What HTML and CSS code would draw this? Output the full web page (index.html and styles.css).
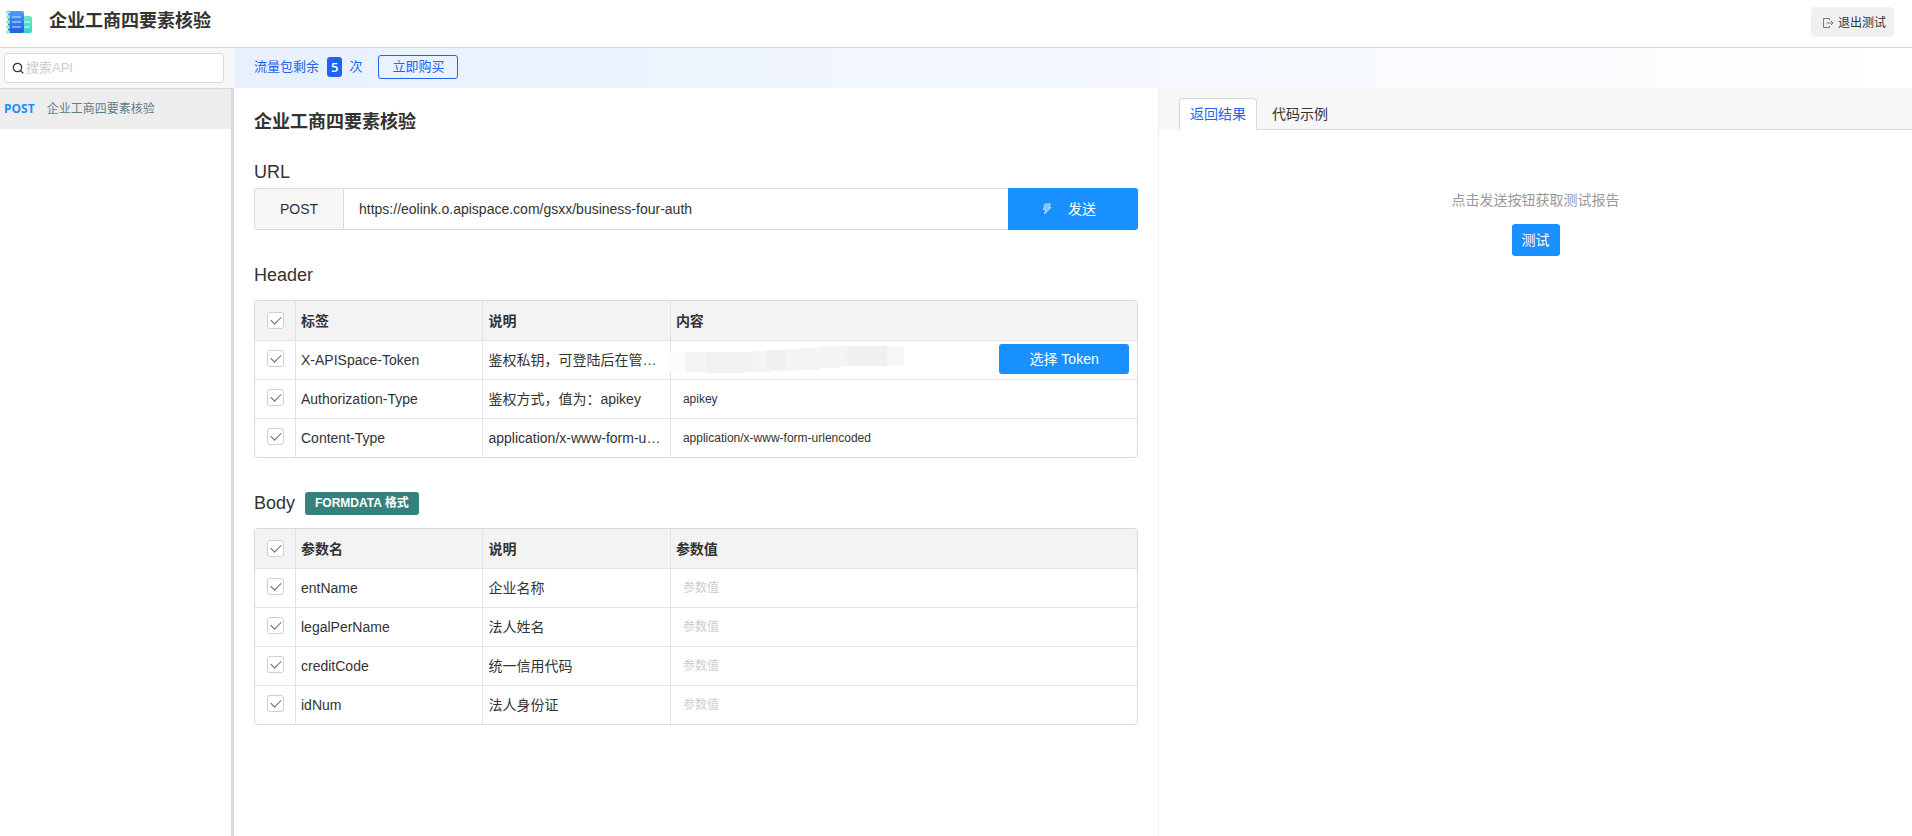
FILE: index.html
```html
<!DOCTYPE html>
<html lang="zh-CN">
<head>
<meta charset="utf-8">
<title>企业工商四要素核验</title>
<link rel="stylesheet" href="styles.css">
</head>
<body>
<header class="topbar">
  <svg class="logo" viewBox="0 0 28 24" aria-hidden="true">
    <defs>
      <linearGradient id="book" x1="0" y1="0" x2="0" y2="1"><stop offset="0" stop-color="#4f9bff"/><stop offset="1" stop-color="#1c5fe8"/></linearGradient>
      <linearGradient id="page" x1="0" y1="0" x2="0" y2="1"><stop offset="0" stop-color="#6fe9c4"/><stop offset="1" stop-color="#2fd6d0"/></linearGradient>
    </defs>
    <rect x="15" y="6" width="12" height="17" rx="2" fill="url(#page)"/>
    <path d="M19 12h6M19 17h6" stroke="#d3faf0" stroke-width="1"/>
    <rect x="3" y="1" width="16" height="22" rx="2" fill="url(#book)"/>
    <path d="M7 7h9M7 12h9M7 17h9" stroke="#d6e7ff" stroke-width="1"/>
    <g fill="#8ff0c8"><circle cx="3" cy="2" r="2"/><circle cx="3" cy="7" r="2"/><circle cx="3" cy="12" r="2"/><circle cx="3" cy="17" r="2"/><circle cx="3" cy="22" r="2"/></g>
  </svg>
  <h1 class="topbar-title">企业工商四要素核验</h1>
  <button class="exit" type="button">
    <svg class="exit-icon" viewBox="0 0 12 12" aria-hidden="true"><path d="M7.500 3V1.500H1.500V10.500H7.500V9M4.500 6H11M9 4l2 2-2 2" fill="none" stroke="#777" stroke-width="1"/></svg>
    退出测试
  </button>
</header>
<div class="layout">
  <aside class="sidebar">
    <div class="search">
      <label class="search-box">
        <svg class="search-icon" viewBox="0 0 12 12" aria-hidden="true"><circle cx="5.500" cy="5.500" r="4.200" fill="none" stroke="#333" stroke-width="1.200"/><path d="M8.500 8.500L11.300 11.300" stroke="#333" stroke-width="1.200"/></svg>
        <input class="search-input" type="text" placeholder="搜索API" aria-label="搜索API">
      </label>
    </div>
    <nav class="api-list">
      <a class="api-item" href="#"><span class="api-method">POST</span><span class="api-name">企业工商四要素核验</span></a>
    </nav>
  </aside>
  <div class="content">
    <div class="notice">
      <span>流量包剩余</span><span class="count">5</span><span>次</span>
      <button class="buy" type="button">立即购买</button>
    </div>
    <div class="panels">
      <main class="request">
        <h2 class="request-title">企业工商四要素核验</h2>
        <label class="section-title" for="url">URL</label>
        <div class="url-bar">
          <span class="url-method">POST</span>
          <input class="url-input" id="url" type="text" value="https://eolink.o.apispace.com/gsxx/business-four-auth">
          <button class="send" type="button">
            <svg class="send-icon" viewBox="0 0 10 12" aria-hidden="true"><path d="M3 1H8.500L7 4.500H9L2.500 11L4 6.500H1.500Z" fill="#7fc0ff" stroke="#b8dcff" stroke-width="1"/></svg>
            发送
          </button>
        </div>
        <h3 class="section-title section-gap">Header</h3>
        <div class="table-box">
          <table class="params">
            <colgroup><col class="col-check"><col class="col-name"><col class="col-desc"><col></colgroup>
            <thead><tr><th class="check-cell"><input class="check" type="checkbox" checked aria-label="全选"></th><th>标签</th><th>说明</th><th>内容</th></tr></thead>
            <tbody>
              <tr><td class="check-cell"><input class="check" type="checkbox" checked aria-label="X-APISpace-Token"></td><td>X-APISpace-Token</td><td>鉴权私钥，可登陆后在管理后台查看</td>
                <td class="token-cell"><div class="token-row"><input class="value" type="text" aria-label="X-APISpace-Token 内容"><button class="token" type="button">选择 Token</button></div>
                  <svg class="smear" viewBox="0 0 237 28" aria-hidden="true">
                    <path d="M0 6H86V5H99V4H119V3H131V2H152V0H237V20H172V22H153V24H126V25H106V26H77V27H40V26H0Z" fill="#f4f4f4"/>
                    <path d="M0 6H19V26H0Z" fill="#fcfcfc"/><path d="M39 6H86V26H77V27H40Z" fill="#f1f1f1"/><path d="M99 4H119V24H99ZM180 0H220V20H180Z" fill="#f0f0f0"/><path d="M220 0H237V20H220Z" fill="#f6f6f6"/>
                  </svg></td></tr>
              <tr><td class="check-cell"><input class="check" type="checkbox" checked aria-label="Authorization-Type"></td><td>Authorization-Type</td><td>鉴权方式，值为：apikey</td><td><input class="value" type="text" value="apikey" aria-label="Authorization-Type 内容"></td></tr>
              <tr><td class="check-cell"><input class="check" type="checkbox" checked aria-label="Content-Type"></td><td>Content-Type</td><td>application/x-www-form-urlencoded</td><td><input class="value" type="text" value="application/x-www-form-urlencoded" aria-label="Content-Type 内容"></td></tr>
            </tbody>
          </table>
        </div>
        <h3 class="section-title section-gap">Body <span class="format">FORMDATA 格式</span></h3>
        <div class="table-box">
          <table class="params">
            <colgroup><col class="col-check"><col class="col-name"><col class="col-desc"><col></colgroup>
            <thead><tr><th class="check-cell"><input class="check" type="checkbox" checked aria-label="全选"></th><th>参数名</th><th>说明</th><th>参数值</th></tr></thead>
            <tbody>
              <tr><td class="check-cell"><input class="check" type="checkbox" checked aria-label="entName"></td><td>entName</td><td>企业名称</td><td><input class="value" type="text" placeholder="参数值" aria-label="entName 参数值"></td></tr>
              <tr><td class="check-cell"><input class="check" type="checkbox" checked aria-label="legalPerName"></td><td>legalPerName</td><td>法人姓名</td><td><input class="value" type="text" placeholder="参数值" aria-label="legalPerName 参数值"></td></tr>
              <tr><td class="check-cell"><input class="check" type="checkbox" checked aria-label="creditCode"></td><td>creditCode</td><td>统一信用代码</td><td><input class="value" type="text" placeholder="参数值" aria-label="creditCode 参数值"></td></tr>
              <tr><td class="check-cell"><input class="check" type="checkbox" checked aria-label="idNum"></td><td>idNum</td><td>法人身份证</td><td><input class="value" type="text" placeholder="参数值" aria-label="idNum 参数值"></td></tr>
            </tbody>
          </table>
        </div>
      </main>
      <section class="result">
        <div class="tabs" role="tablist">
          <button class="tab tab-active" type="button" role="tab" aria-selected="true">返回结果</button>
          <div class="tabs-rest"><button class="tab" type="button" role="tab" aria-selected="false">代码示例</button></div>
        </div>
        <div class="empty">
          <p class="empty-text">点击发送按钮获取测试报告</p>
          <button class="test" type="button">测试</button>
        </div>
      </section>
    </div>
  </div>
</div>
</body>
</html>
```
FILE: styles.css
```css
* { box-sizing: border-box; }
body {
  margin: 0;
  min-height: 100vh;
  display: flex;
  flex-direction: column;
  font: 14px/20px "Liberation Sans", "Noto Sans CJK SC", sans-serif;
  color: #333;
  background: #fff;
}
button, input { font: inherit; color: inherit; margin: 0; }
button { border: 0; cursor: pointer; }
h1, h2, h3, p { margin: 0; }

.topbar {
  display: flex;
  align-items: flex-start;
  height: 48px;
  padding: 7px 18px 0 5px;
  border-bottom: 1px solid #d9d9d9;
}
.logo { width: 28px; height: 24px; margin-top: 3px; }
.topbar-title { margin-left: 16px; font-size: 18px; line-height: 28px; font-weight: 700; }
.exit {
  display: flex;
  align-items: center;
  gap: 4px;
  height: 30px;
  margin-left: auto;
  padding: 1px 8px 0 11px;
  border-radius: 4px;
  background: #f0f0f0;
  font-size: 12px;
}
.exit-icon { width: 12px; height: 12px; }

.layout { flex: 1; display: flex; }
.sidebar { width: 234px; flex: none; display: flex; flex-direction: column; }
.search { padding: 5px 10px 5px 4px; background: #f7f7f7; border-bottom: 1px solid #d9d9d9; }
.search-box {
  display: flex;
  align-items: center;
  gap: 2px;
  height: 30px;
  padding: 0 7px;
  border: 1px solid #d9d9d9;
  border-radius: 3px;
  background: #fff;
}
.search-icon { width: 12px; height: 12px; flex: none; }
.search-input { flex: 1; min-width: 0; padding: 0; border: 0; outline: 0; background: none; font-size: 13px; }
::placeholder { color: #ccc; opacity: 1; }
.api-list { flex: 1; border-right: 3px solid #d9d9d9; }
.api-item {
  display: flex;
  align-items: center;
  gap: 12px;
  height: 40px;
  padding: 0 4px;
  background: #ededed;
  font-size: 12px;
  text-decoration: none;
}
.api-method { color: #1890ff; font-family: "Open Sans", sans-serif; font-weight: 700; }
.api-name { color: #607d8b; }

.content { flex: 1; min-width: 0; display: flex; flex-direction: column; }
.notice {
  display: flex;
  align-items: center;
  height: 40px;
  padding: 0 20px 2px;
  background: linear-gradient(90deg, #e8f0fe, #fff);
  color: #1f63f0;
  font-size: 13px;
}
.count {
  margin: 0 7px 0 8px;
  padding: 0 4px;
  border-radius: 3px;
  background: #1f63f0;
  color: #fff;
  font-family: "Open Sans", sans-serif;
  font-weight: 600;
}
.buy {
  height: 24px;
  margin-left: 16px;
  padding: 0 13px;
  border: 1px solid #1f63f0;
  border-radius: 3px;
  background: none;
  line-height: 20px;
}

.panels { flex: 1; display: grid; grid-template-columns: 38fr 31fr; }
.request { min-width: 0; padding: 20px 20px 40px; }
.request-title { font-size: 18px; line-height: 28px; font-weight: 700; }
.section-title {
  display: flex;
  align-items: center;
  gap: 10px;
  margin-top: 24px;
  font-size: 18px;
  line-height: 24px;
  font-weight: 400;
}
.url-bar { display: flex; height: 42px; margin-top: 4px; }
.url-method {
  width: 90px;
  border: 1px solid #d9d9d9;
  border-radius: 3px 0 0 3px;
  background: #f7f7f7;
  line-height: 40px;
  text-align: center;
}
.url-input { flex: 1; min-width: 0; padding: 0 15px; border: solid #d9d9d9; border-width: 1px 0; outline: 0; }
.send {
  display: flex;
  align-items: center;
  justify-content: center;
  gap: 16px;
  width: 130px;
  padding: 0 16px 0 8px;
  border-radius: 0 3px 3px 0;
  background: #1890ff;
  color: #fff;
}
.send-icon { width: 10px; height: 12px; }
.section-gap { margin: 33px 0 13px; }
.table-box { border: 1px solid #d9d9d9; border-radius: 4px; overflow: hidden; }
.params { width: 100%; table-layout: fixed; border-collapse: separate; border-spacing: 0; }
.col-check { width: 41px; }
.col-name, .col-desc { width: 21.25%; }
.params th, .params td {
  height: 39px;
  padding: 0 5px;
  border: solid #e3e3e3;
  border-width: 0 1px 1px 0;
  text-align: left;
  white-space: nowrap;
  overflow: hidden;
  text-overflow: ellipsis;
}
.params th { height: 40px; background: #f3f3f3; }
.params th:last-child, .params td:last-child { border-right: 0; }
.params tbody tr:last-child td { height: 38px; border-bottom: 0; }
.params .check-cell { padding: 0 0 0 12px; }
.check {
  display: block;
  appearance: none;
  width: 17px;
  height: 17px;
  border: 1px solid #d0d0d0;
  border-radius: 3px;
  background: #fff;
}
td .check { margin-bottom: 3px; }
.check:checked::before {
  content: "";
  display: block;
  width: 9px;
  height: 5px;
  margin: 3px;
  border: solid #666;
  border-width: 0 0 1px 1px;
  transform: rotate(-45deg);
}
.value { display: block; width: 100%; padding: 0 7px; border: 0; outline: 0; background: none; font-size: 12px; }
.params .token-cell { position: relative; overflow: visible; }
.token-row { display: flex; align-items: center; padding: 0 3px 2px 0; }
.token {
  flex: none;
  width: 130px;
  height: 30px;
  border-radius: 3px;
  background: #1890ff;
  color: #fff;
}
.smear { position: absolute; left: -4px; top: 5px; width: 237px; height: 28px; }
.format {
  padding: 0 10px;
  border-radius: 3px;
  background: #37807e;
  color: #fff;
  font-size: 12px;
  line-height: 23px;
  font-weight: 700;
}

.result { min-width: 0; border-left: 1px solid #eee; }
.tabs { display: flex; height: 42px; padding: 10px 0 0 20px; background: #f7f7f7; }
.tabs-rest { flex: 1; display: flex; border-bottom: 1px solid #d9d9d9; }
.tab { padding: 0 15px; background: none; }
.tab-active {
  padding: 0 10px 2px;
  border: 1px solid #d9d9d9;
  border-bottom: 0;
  border-radius: 4px 4px 0 0;
  background: #fff;
  color: #1f63f0;
}
.empty { display: flex; flex-direction: column; align-items: center; gap: 14px; padding-top: 60px; }
.empty-text { color: #999; }
.test { height: 32px; padding: 0 10px; border-radius: 3px; background: #1890ff; color: #fff; }
```
